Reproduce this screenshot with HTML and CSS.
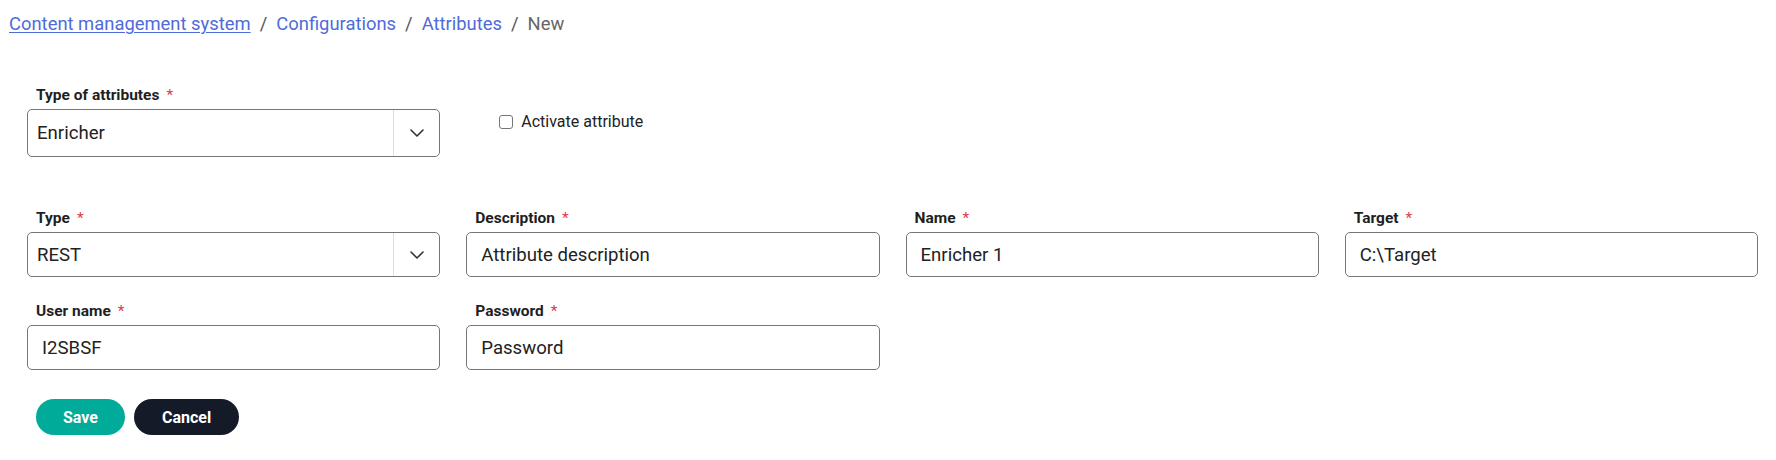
FILE: index.html
```html
<!DOCTYPE html>
<html lang="en">
<head>
<meta charset="utf-8">
<title>New attribute</title>
<link rel="stylesheet" href="styles.css">
</head>
<body>
<nav class="breadcrumb">
  <a class="crumb crumb-link crumb-underline" href="#">Content management system</a><span class="sep">/</span><a class="crumb crumb-link" href="#">Configurations</a><span class="sep">/</span><a class="crumb crumb-link" href="#">Attributes</a><span class="sep">/</span><span class="crumb crumb-current">New</span>
</nav>

<form class="form">
  <div class="grid grid-top">
    <div class="field">
      <label class="label">Type of attributes<span class="req">*</span></label>
      <div class="select select-lg">
        <span class="select-value">Enricher</span>
        <span class="select-arrow">
          <svg width="14" height="8" viewBox="0 0 14 8"><path d="M1 1 L7 7 L13 1" fill="none" stroke="#333" stroke-width="1.6" stroke-linecap="round" stroke-linejoin="round"/></svg>
        </span>
      </div>
    </div>
    <div class="check-field">
      <label class="check"><span class="box"></span><span class="check-text">Activate attribute</span></label>
    </div>
  </div>

  <div class="grid grid-main">
    <div class="field">
      <label class="label">Type<span class="req">*</span></label>
      <div class="select">
        <span class="select-value">REST</span>
        <span class="select-arrow">
          <svg width="14" height="8" viewBox="0 0 14 8"><path d="M1 1 L7 7 L13 1" fill="none" stroke="#333" stroke-width="1.6" stroke-linecap="round" stroke-linejoin="round"/></svg>
        </span>
      </div>
    </div>
    <div class="field">
      <label class="label">Description<span class="req">*</span></label>
      <div class="input">Attribute description</div>
    </div>
    <div class="field">
      <label class="label">Name<span class="req">*</span></label>
      <div class="input">Enricher 1</div>
    </div>
    <div class="field">
      <label class="label">Target<span class="req">*</span></label>
      <div class="input">C:\Target</div>
    </div>
    <div class="field">
      <label class="label">User name<span class="req">*</span></label>
      <div class="input">I2SBSF</div>
    </div>
    <div class="field">
      <label class="label">Password<span class="req">*</span></label>
      <div class="input">Password</div>
    </div>
  </div>

  <div class="actions">
    <button type="button" class="btn btn-save">Save</button>
    <button type="button" class="btn btn-cancel">Cancel</button>
  </div>
</form>
</body>
</html>
```

FILE: styles.css
```css
* { box-sizing: border-box; }

html, body {
  margin: 0;
  padding: 0;
  background: #ffffff;
  font-family: Roboto, "Liberation Sans", Arial, sans-serif;
  color: #222222;
}

.breadcrumb {
  padding: 13px 9px 0 9px;
  font-size: 18.4px;
  line-height: 22px;
  height: 35px;
}

.crumb-link {
  color: #4f6bd8;
  text-decoration: none;
}

.crumb-underline {
  text-decoration: underline;
  text-decoration-thickness: 1px;
  text-underline-offset: 2px;
}

.sep {
  color: #555555;
  padding: 0 9px;
}

.crumb-current {
  color: #666666;
}

.form {
  padding: 0 18px 0 27px;
}

.grid {
  display: grid;
  grid-template-columns: repeat(4, 1fr);
  column-gap: 26px;
}

.grid-top {
  margin-top: 50px;
}

.grid-main {
  margin-top: 51px;
  row-gap: 24px;
}

.field {
  display: flex;
  flex-direction: column;
}

.label {
  display: block;
  font-size: 15.5px;
  font-weight: 700;
  line-height: 20px;
  color: #1f1f1f;
  padding-left: 9px;
  margin-bottom: 4px;
}

.req {
  color: #e03a4a;
  font-weight: 400;
  margin-left: 7px;
}

.select {
  display: flex;
  height: 45px;
  border: 1px solid #767676;
  border-radius: 5px;
  background: #fff;
}

.select-lg {
  height: 48px;
}

.select-value {
  flex: 1;
  display: flex;
  align-items: center;
  padding-left: 9px;
  font-size: 18.6px;
  color: #222;
}

.select-arrow {
  width: 46px;
  border-left: 1px solid #dddddd;
  display: flex;
  align-items: center;
  justify-content: center;
}

.input {
  height: 45px;
  border: 1px solid #767676;
  border-radius: 5px;
  display: flex;
  align-items: center;
  padding-left: 14px;
  font-size: 18.6px;
  color: #222;
  background: #fff;
}

.check-field {
  padding-left: 33px;
  padding-top: 28px;
}

.check {
  display: flex;
  align-items: center;
  gap: 8px;
}

.box {
  width: 14px;
  height: 14px;
  border: 1.5px solid #767676;
  border-radius: 3px;
  background: #fff;
}

.check-text {
  font-size: 16px;
  line-height: 18px;
  color: #222;
}

.actions {
  display: flex;
  gap: 9px;
  padding-left: 9px;
  margin-top: 29px;
}

.btn {
  height: 36px;
  border: none;
  border-radius: 18px;
  padding: 0 27px;
  font-family: Roboto, "Liberation Sans", Arial, sans-serif;
  font-size: 16px;
  font-weight: 700;
  color: #ffffff;
  cursor: pointer;
}

.btn-save {
  background: #00ab9a;
}

.btn-cancel {
  background: #141a28;
  padding: 0 28px;
}
```
